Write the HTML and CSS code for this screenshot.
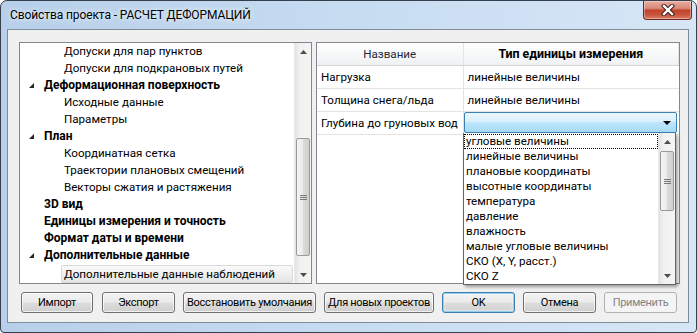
FILE: index.html
```html
<!DOCTYPE html>
<html lang="ru">
<head>
  <meta charset="UTF-8">
  <title>Свойства проекта - РАСЧЕТ ДЕФОРМАЦИЙ</title>
  <link rel="stylesheet" href="styles.css">
</head>
<body>
  <div class="window">
    <div class="titlebar">
      <span class="title">Свойства проекта - РАСЧЕТ ДЕФОРМАЦИЙ</span>
      <div class="close">
        <svg width="14" height="12" viewBox="0 0 14 12">
          <path d="M3 2 L11 10 M11 2 L3 10" stroke="#3a1c16" stroke-width="4.4" stroke-linecap="square"/>
          <path d="M3 2 L11 10 M11 2 L3 10" stroke="#fff" stroke-width="2.4" stroke-linecap="square"/>
        </svg>
      </div>
    </div>

    <div class="client">
      <div class="panels">
        <div class="tree">
          <ul class="tree-list">
            <li class="child">Допуски для пар пунктов</li>
            <li class="child">Допуски для подкрановых путей</li>
            <li class="parent"><span class="expander"><svg width="5" height="5" viewBox="0 0 5 5"><polygon points="5,0 5,5 0,5" fill="#262626"/></svg></span>Деформационная поверхность</li>
            <li class="child">Исходные данные</li>
            <li class="child">Параметры</li>
            <li class="parent"><span class="expander"><svg width="5" height="5" viewBox="0 0 5 5"><polygon points="5,0 5,5 0,5" fill="#262626"/></svg></span>План</li>
            <li class="child">Координатная сетка</li>
            <li class="child">Траектории плановых смещений</li>
            <li class="child">Векторы сжатия и растяжения</li>
            <li class="parent"><span class="expander"></span>3D вид</li>
            <li class="parent"><span class="expander"></span>Единицы измерения и точность</li>
            <li class="parent"><span class="expander"></span>Формат даты и времени</li>
            <li class="parent"><span class="expander"><svg width="5" height="5" viewBox="0 0 5 5"><polygon points="5,0 5,5 0,5" fill="#262626"/></svg></span>Дополнительные данные</li>
            <li class="child"><span class="selected">Дополнительные данные наблюдений</span></li>
          </ul>
          <div class="vscroll tree-scroll">
            <div class="arrow"><svg width="7" height="4" viewBox="0 0 7 4"><polygon points="0,4 3.5,0 7,4" fill="#4d4d4d"/></svg></div>
            <div class="track">
              <div class="thumb"><span class="grip"></span></div>
            </div>
            <div class="arrow"><svg width="7" height="4" viewBox="0 0 7 4"><polygon points="0,0 7,0 3.5,4" fill="#4d4d4d"/></svg></div>
          </div>
        </div>

        <div class="grid">
          <table>
            <tr class="head">
              <th class="name-col">Название</th>
              <th class="type-col">Тип единицы измерения</th>
            </tr>
            <tr>
              <td>Нагрузка</td>
              <td>линейные величины</td>
            </tr>
            <tr>
              <td>Толщина снега/льда</td>
              <td>линейные величины</td>
            </tr>
            <tr>
              <td>Глубина до груновых вод</td>
              <td class="combo-cell">
                <div class="combo">
                  <svg width="8" height="4" viewBox="0 0 8 4"><polygon points="0,0 8,0 4,4" fill="#000"/></svg>
                </div>
              </td>
            </tr>
          </table>

          <div class="dropdown">
            <ul class="options">
              <li class="focused">угловые величины</li>
              <li>линейные величины</li>
              <li>плановые координаты</li>
              <li>высотные координаты</li>
              <li>температура</li>
              <li>давление</li>
              <li>влажность</li>
              <li>малые угловые величины</li>
              <li>СКО (X, Y, расст.)</li>
              <li>СКО Z</li>
            </ul>
            <div class="vscroll list-scroll">
              <div class="arrow"><svg width="7" height="4" viewBox="0 0 7 4"><polygon points="0,4 3.5,0 7,4" fill="#4d4d4d"/></svg></div>
              <div class="track">
                <div class="thumb"><span class="grip"></span></div>
              </div>
              <div class="arrow"><svg width="7" height="4" viewBox="0 0 7 4"><polygon points="0,0 7,0 3.5,4" fill="#4d4d4d"/></svg></div>
            </div>
          </div>
        </div>
      </div>

      <div class="buttons">
        <button class="btn w72">Импорт</button>
        <button class="btn w73">Экспорт</button>
        <button class="btn w133">Восстановить умолчания</button>
        <button class="btn w110">Для новых проектов</button>
        <button class="btn w73 default">OK</button>
        <button class="btn w73">Отмена</button>
        <button class="btn w73" disabled>Применить</button>
      </div>
    </div>
  </div>
</body>
</html>
```

FILE: styles.css
```css
* {
  margin: 0;
  padding: 0;
  box-sizing: border-box;
}

body {
  font-family: Roboto, "Noto Sans", sans-serif;
  font-size: 11.6px;
  color: #000;
  background: #fff;
}

/* window frame */

.window {
  width: 697px;
  height: 333px;
  border: 1px solid #34404e;
  border-radius: 7px 7px 4px 4px;
  background: linear-gradient(to right, #b7cfe9, #c9ddf2 55%, #d6e6f6);
  padding: 0 7px 9px 6px;
  display: flex;
  flex-direction: column;
  overflow: hidden;
}

.titlebar {
  height: 28px;
  display: flex;
  align-items: flex-start;
  justify-content: space-between;
}

.title {
  padding: 7px 0 0 3px;
  font-size: 12px;
  line-height: 15px;
  letter-spacing: -0.1px;
  color: #000;
  text-shadow: 0 0 6px #e6f0fa, 0 0 3px #e6f0fa;
}

.close {
  width: 49px;
  height: 19px;
  margin-right: -3px;
  border: 1px solid #6e2b21;
  border-top: none;
  border-radius: 0 0 4px 4px;
  background: linear-gradient(#e8ac9e, #d98b7a 40%, #c5432d 52%, #c9533c 75%, #da7c63);
  box-shadow: inset 0 0 0 1px rgba(255, 255, 255, 0.35);
  display: flex;
  align-items: center;
  justify-content: center;
}

.client {
  height: 294px;
  border: 1px solid #7f8c9a;
  background: #f0f0f0;
  padding: 12px 8px 0 11px;
}

/* panels */

.panels {
  display: flex;
  gap: 4px;
  height: 242px;
}

.tree {
  width: 293px;
  border: 1px solid #828790;
  background: #fff;
  display: flex;
}

.tree-list {
  list-style: none;
  flex: 1;
  padding-right: 1px;
}

.tree-list li {
  height: 17px;
  line-height: 17px;
  white-space: nowrap;
  display: flex;
  align-items: center;
}

.tree-list .child {
  padding-left: 44px;
}

.tree-list .parent {
  font-weight: bold;
  font-size: 12px;
  padding-left: 9px;
}

.expander {
  width: 15px;
  height: 17px;
  display: flex;
  align-items: center;
  padding-bottom: 1px;
}

.tree-list .child:has(.selected) {
  padding-left: 41px;
}

.selected {
  flex: 1;
  height: 18px;
  line-height: 16px;
  padding-left: 2px;
  border: 1px solid #d9d9d9;
  border-radius: 2px;
  background: linear-gradient(#fafafa, #e5e5e5);
  margin-top: 2px;
}

/* scrollbars */

.vscroll {
  width: 17px;
  display: flex;
  flex-direction: column;
  background: linear-gradient(to right, #e3e3e3, #f1f1f1 30%, #f4f4f4);
  border-left: 1px solid #e9e9e9;
}

.vscroll .arrow {
  height: 17px;
  display: flex;
  align-items: center;
  justify-content: center;
}

.vscroll .track {
  flex: 1;
  display: flex;
  flex-direction: column;
}

.vscroll .thumb {
  margin: 0 1px;
  border: 1px solid #9a9a9a;
  border-radius: 2px;
  background: linear-gradient(to right, #f4f4f4, #ececec 45%, #dadada 55%, #cfcfcf);
  display: flex;
  align-items: center;
  justify-content: center;
}

.grip {
  width: 7px;
  height: 5px;
  border-top: 1px solid #777;
  border-bottom: 1px solid #777;
}

.grip::after {
  content: "";
  display: block;
  margin-top: 1px;
  height: 1px;
  background: #777;
}

.tree-scroll .track {
  padding-top: 78px;
}

.tree-scroll .thumb {
  height: 118px;
}

/* property grid */

.grid {
  width: 364px;
  border: 1px solid #828790;
  background: #fff;
  position: relative;
}

.grid table {
  width: 100%;
  border-collapse: collapse;
  table-layout: fixed;
}

.grid th,
.grid td {
  height: 23px;
  padding: 0 4px;
  border-bottom: 1px solid #e3e3e3;
  border-right: 1px solid #e3e3e3;
  text-align: left;
  white-space: nowrap;
  overflow: hidden;
}

.grid td:last-child,
.grid th:last-child {
  border-right: none;
}

.grid .head th {
  height: 22px;
  background: linear-gradient(#ffffff, #f7f8f9 50%, #f0f1f2);
  border-bottom: 1px solid #d5d5d5;
  border-right: 1px solid #e3e3e3;
  text-align: center;
  color: #1e2a3a;
}

.grid .head .name-col {
  width: 146px;
  font-weight: normal;
}

.grid .head .type-col {
  font-weight: bold;
  font-size: 12.4px;
  color: #000;
}

.grid .combo-cell {
  padding: 0 2px 0 0;
}

.combo {
  height: 21px;
  border: 1px solid #3c7fb1;
  border-radius: 2px;
  background: linear-gradient(#eaf6fd, #d9f0fc 45%, #bee6fd 50%, #a7d9f5);
  display: flex;
  align-items: center;
  justify-content: flex-end;
  padding-right: 5px;
}

.dropdown {
  position: absolute;
  left: 146px;
  top: 90px;
  width: 213px;
  height: 152px;
  background: #fff;
  border: 1px solid #646464;
  border-top: none;
  box-shadow: 2px 2px 3px rgba(0, 0, 0, 0.35);
  display: flex;
}

.options {
  list-style: none;
  flex: 1;
  padding-top: 1px;
}

.options li {
  height: 15px;
  line-height: 14px;
  padding-left: 2px;
  white-space: nowrap;
}

.options .focused {
  border: 1px dotted #000;
  padding-left: 1px;
  line-height: 13px;
}

.list-scroll .track {
  padding-top: 1px;
}

.list-scroll .thumb {
  height: 60px;
}

/* buttons */

.buttons {
  display: flex;
  gap: 8px;
  margin-top: 8px;
  padding-left: 2px;
}

.btn {
  height: 21px;
  padding: 0 1px;
  font-family: inherit;
  font-size: 11px;
  font-weight: normal;
  letter-spacing: -0.3px;
  color: #000;
  border: 1px solid #707070;
  border-radius: 3px;
  background: linear-gradient(#f2f2f2, #ebebeb 48%, #dddddd 52%, #cfcfcf);
  box-shadow: inset 0 0 0 1px rgba(255, 255, 255, 0.7);
  white-space: nowrap;
}

.btn:first-child {
  margin-right: 1px;
}

.w72 { width: 72px; }
.w73 { width: 73px; }
.w110 { width: 110px; }
.w133 { width: 133px; }

.btn.default {
  border-color: #3c7fb1;
  box-shadow: inset 0 0 0 1px #8fd0f3, inset 0 0 3px 1px rgba(255, 255, 255, 0.8);
}

.btn:disabled {
  border-color: #adb2b5;
  background: #f4f4f4;
  color: #838383;
  box-shadow: none;
}
```
